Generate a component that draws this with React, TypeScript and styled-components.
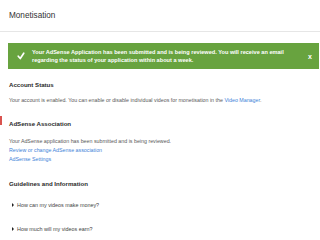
import React from 'react';
import styled, { createGlobalStyle } from 'styled-components';

const GlobalStyle = createGlobalStyle`
  html, body {
    margin: 0;
    padding: 0;
    background: #fff;
  }
  body {
    width: 320px;
    height: 240px;
    overflow: hidden;
    font-family: 'Liberation Sans', Arial, sans-serif;
    color: #555;
  }
`;

const Page = styled.div`
  position: relative;
  width: 320px;
  height: 240px;
  overflow: hidden;
`;

const Header = styled.div`
  height: 32px;
  display: flex;
  align-items: center;
  padding-left: 9px;
  border-bottom: 1px solid #e6e6e6;
  box-sizing: border-box;
`;

const Title = styled.h1`
  margin: 0;
  font-size: 8.2px;
  font-weight: 400;
  color: #333;
`;

const Banner = styled.div`
  margin: 11px 1px 0 8px;
  height: 26px;
  background: #68a33f;
  display: flex;
  align-items: center;
  padding: 0 7px 0 9px;
  box-sizing: border-box;
  color: #fff;
`;

const Check = styled.svg`
  width: 8px;
  height: 8px;
  flex: none;
  margin-right: 7px;
`;

const BannerText = styled.div`
  flex: 1;
  font-size: 5.6px;
  font-weight: 700;
  line-height: 8.5px;
  white-space: nowrap;
`;

const Close = styled.span`
  font-size: 7px;
  font-weight: 700;
`;

const Section = styled.section<{ $top: number }>`
  margin-top: ${({ $top }) => $top}px;
  padding-left: 9px;
`;

const Heading = styled.h2`
  margin: 0;
  font-size: 6.1px;
  font-weight: 700;
  color: #2a2a2a;
  line-height: 8px;
`;

const Line = styled.p<{ $gap?: number }>`
  margin: ${({ $gap }) => $gap ?? 0}px 0 0;
  font-size: 5.3px;
  line-height: 9px;
  color: #595959;
  white-space: nowrap;
`;

const Link = styled.a`
  color: #3d82d8;
  text-decoration: none;
`;

const Marker = styled.div`
  position: absolute;
  left: 0;
  top: 116px;
  width: 2px;
  height: 9px;
  background: #d9534f;
`;

const Toggle = styled.div<{ $gap: number }>`
  margin-top: ${({ $gap }) => $gap}px;
  display: flex;
  align-items: center;
  padding-left: 12px;
  font-size: 5.4px;
  line-height: 8px;
  color: #444;
  &::before {
    content: '';
    width: 0;
    height: 0;
    border-top: 2px solid transparent;
    border-bottom: 2px solid transparent;
    border-left: 2.5px solid #222;
    margin-right: 3px;
  }
`;

const App = (): JSX.Element => {
  return (
    <Page>
      <GlobalStyle />
      <Header>
        <Title>Monetisation</Title>
      </Header>
      <Banner>
        <Check viewBox="0 0 16 16">
          <path d="M2.5 8.5 L6.5 13 L13.5 2.5" stroke="#fff" strokeWidth="3.4" fill="none" strokeLinecap="round" strokeLinejoin="round" />
        </Check>
        <BannerText>
          Your AdSense Application has been submitted and is being reviewed. You will receive an email
          <br />
          regarding the status of your application within about a week.
        </BannerText>
        <Close>x</Close>
      </Banner>
      <Marker />
      <Section $top={12}>
        <Heading>Account Status</Heading>
        <Line $gap={7}>
          Your account is enabled. You can enable or disable individual videos for monetisation in the{' '}
          <Link>Video Manager</Link>.
        </Line>
      </Section>
      <Section $top={15}>
        <Heading>AdSense Association</Heading>
        <Line $gap={9}>Your AdSense application has been submitted and is being reviewed.</Line>
        <Line>
          <Link>Review or change AdSense association</Link>
        </Line>
        <Line>
          <Link>AdSense Settings</Link>
        </Line>
      </Section>
      <Section $top={16}>
        <Heading>Guidelines and Information</Heading>
      </Section>
      <Toggle $gap={13}>How can my videos make money?</Toggle>
      <Toggle $gap={16}>How much will my videos earn?</Toggle>
    </Page>
  );
};

export default App;
